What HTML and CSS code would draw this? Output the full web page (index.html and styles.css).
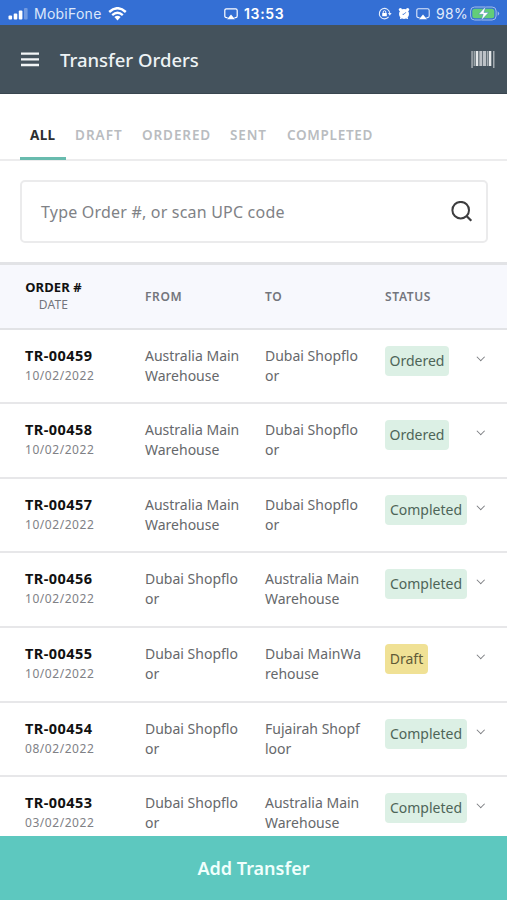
FILE: index.html
```html
<!DOCTYPE html>
<html lang="en">
<head>
<meta charset="utf-8">
<title>Transfer Orders</title>
<link rel="stylesheet" href="styles.css">
</head>
<body>
<div class="app">
  <div class="statusbar">
    <div class="carrier">
      <svg width="21" height="14" viewBox="0 0 21 14"><g fill="#fff"><rect x="0.5" y="8.5" width="3.6" height="4" rx="1"/><rect x="5.7" y="6.5" width="3.6" height="6" rx="1"/><rect x="10.8" y="3.5" width="3.6" height="9" rx="1"/><rect x="16" y="1" width="3.6" height="11.5" rx="1" opacity=".3"/></g></svg>
      <span class="carrier-name">MobiFone</span>
      <svg width="19" height="14" viewBox="0 0 19 14"><g fill="none" stroke="#fff" stroke-width="2.4"><path d="M1.2 5Q9.5-2.6 17.8 5"/><path d="M4.2 8.1Q9.5 3.4 14.8 8.1"/></g><path d="M6.4 10.1Q9.5 7.6 12.6 10.1L9.5 13.4Z" fill="#fff"/></svg>
    </div>
    <div class="clock">
      <svg width="14" height="12" viewBox="0 0 14 12"><path d="M3.5 9.6H2.4Q.8 9.6.8 8V2.4Q.8.8 2.4.8h9.2q1.6 0 1.6 1.6V8q0 1.6-1.6 1.6h-1.1" fill="none" stroke="#fff" stroke-width="1.2"/><path d="M7 6.5l4 4.7H3z" fill="#fff"/></svg>
      <span class="time">13:53</span>
    </div>
    <div class="indicators">
      <svg width="14" height="13" viewBox="0 0 14 13"><path d="M10.6 9.9a5.2 5.2 0 1 1 1.1-4" fill="none" stroke="#e6eefb" stroke-width="1.1"/><path d="M9.9 6h3.7l-1.8 2.7z" fill="#e6eefb"/><rect x="4.2" y="6" width="4.6" height="3.3" rx=".5" fill="#fff"/><path d="M5.2 6V5a1.3 1.3 0 0 1 2.6 0v1" fill="none" stroke="#fff" stroke-width=".9"/></svg>
      <svg width="12" height="13" viewBox="0 0 12 13"><circle cx="6" cy="7" r="5" fill="#fff"/><circle cx="2.4" cy="2.6" r="1.6" fill="#fff"/><circle cx="9.600" cy="2.600" r="1.600" fill="#fff"/><path d="M2.300 10l-.3 2h2zM9.700 10l.3 2H8z" fill="#fff"/><path d="M7.800 5.300 6 7.300H4.600" fill="none" stroke="#346fd4" stroke-width=".9"/></svg>
      <svg width="14" height="12" viewBox="0 0 14 12"><path d="M3.500 9.600H2.400Q.8 9.600.8 8V2.400Q.8.8 2.400.8h9.200q1.600 0 1.600 1.600V8q0 1.600-1.600 1.600h-1.100" fill="none" stroke="#dfe9fa" stroke-width="1.100"/><path d="M7 6.500l4 4.700H3z" fill="#fff"/></svg>
      <span class="percent">98%</span>
      <svg class="battery" width="30" height="15" viewBox="0 0 30 15"><rect x=".6" y="1" width="25.500" height="13" rx="4" fill="none" stroke="#a3bdea" stroke-width="1"/><rect x="2.300" y="2.700" width="22" height="9.600" rx="2.500" fill="#63cd78"/><path d="M27.700 5.200q3 2.300 0 4.600z" fill="#a3bdea"/><path d="M15.700.4 8.600 8.300h4.600l-2 6.300 7.400-8.100h-4.700z" fill="#fff" stroke="#346fd4" stroke-width=".4"/></svg>
    </div>
  </div>

  <header class="appbar">
    <svg width="18" height="15" viewBox="0 0 18 15"><path d="M0 1.600h18M0 7.300h18M0 13h18" stroke="#f2f5f6" stroke-width="2.300"/></svg>
    <h1 class="title">Transfer Orders</h1>
    <svg class="barcode" width="24" height="17" viewBox="0 0 24 17"><g fill="#e4e7e9"><rect x=".3" width="1.500" height="17" opacity=".6"/><rect x="2.600" width="1.400" height="15" opacity=".55"/><rect x="4.700" width="2.600" height="15"/><rect x="8.300" width="3" height="15" opacity=".75"/><rect x="12" width="3" height="15" opacity=".75"/><rect x="15.700" width="1.300" height="15" opacity=".6"/><rect x="17.700" width="2.600" height="15"/><rect x="22" width="1.500" height="17" opacity=".6"/></g></svg>
  </header>

  <nav class="tabs">
    <span class="tab active">ALL</span><span class="tab draft">DRAFT</span><span class="tab ordered">ORDERED</span><span class="tab sent">SENT</span><span class="tab completed">COMPLETED</span>
  </nav>

  <div class="search">
    <span class="placeholder">Type Order #, or scan UPC code</span>
    <svg width="22" height="22" viewBox="0 0 22 22"><circle cx="9.700" cy="9.200" r="8.300" fill="none" stroke="#3d3d3f" stroke-width="2"/><path d="M15.500 15l4.800 4.800" stroke="#3d3d3f" stroke-width="2.200"/></svg>
  </div>

  <main class="table">
    <div class="row head">
      <div class="order-head"><b>ORDER #</b><small>DATE</small></div><span>FROM</span><span>TO</span><span>STATUS</span>
    </div>
    <div class="row">
      <div><b class="num">TR-00459</b><span class="date">10/02/2022</span></div>
      <div class="place">Australia Main<br>Warehouse</div><div class="place">Dubai Shopflo<br>or</div>
      <div><span class="badge b-ordered">Ordered</span></div><i class="chev"></i>
    </div>
    <div class="row">
      <div><b class="num">TR-00458</b><span class="date">10/02/2022</span></div>
      <div class="place">Australia Main<br>Warehouse</div><div class="place">Dubai Shopflo<br>or</div>
      <div><span class="badge b-ordered">Ordered</span></div><i class="chev"></i>
    </div>
    <div class="row">
      <div><b class="num">TR-00457</b><span class="date">10/02/2022</span></div>
      <div class="place">Australia Main<br>Warehouse</div><div class="place">Dubai Shopflo<br>or</div>
      <div><span class="badge b-completed">Completed</span></div><i class="chev"></i>
    </div>
    <div class="row">
      <div><b class="num">TR-00456</b><span class="date">10/02/2022</span></div>
      <div class="place">Dubai Shopflo<br>or</div><div class="place">Australia Main<br>Warehouse</div>
      <div><span class="badge b-completed">Completed</span></div><i class="chev"></i>
    </div>
    <div class="row">
      <div><b class="num">TR-00455</b><span class="date">10/02/2022</span></div>
      <div class="place">Dubai Shopflo<br>or</div><div class="place">Dubai MainWa<br>rehouse</div>
      <div><span class="badge b-draft">Draft</span></div><i class="chev"></i>
    </div>
    <div class="row">
      <div><b class="num">TR-00454</b><span class="date">08/02/2022</span></div>
      <div class="place">Dubai Shopflo<br>or</div><div class="place">Fujairah Shopf<br>loor</div>
      <div><span class="badge b-completed">Completed</span></div><i class="chev"></i>
    </div>
    <div class="row">
      <div><b class="num">TR-00453</b><span class="date">03/02/2022</span></div>
      <div class="place">Dubai Shopflo<br>or</div><div class="place">Australia Main<br>Warehouse</div>
      <div><span class="badge b-completed">Completed</span></div><i class="chev"></i>
    </div>
  </main>

  <footer class="add"><span>Add Transfer</span></footer>
</div>
</body>
</html>
```

FILE: styles.css
```css
* { box-sizing: border-box; }
body { margin: 0; background: #fff; font-family: "Noto Sans", sans-serif; }
svg { display: block; flex: none; }
.app { width: 507px; height: 900px; display: flex; flex-direction: column; overflow: hidden; }

.statusbar {
  height: 25px; flex: none; background: #346fd4; color: #fff;
  display: grid; grid-template-columns: 216px 1fr auto; align-items: center;
  padding: 2px 7px 0 8px; font-family: Inter, sans-serif;
}
.carrier, .clock, .indicators { display: flex; align-items: center; }
.carrier-name { font-size: 14px; margin: 0 7px 0 5px; width: 67px; letter-spacing: 0.25px; color: #dce7fa; }
.clock { gap: 6px; }
.time { font-size: 14px; font-weight: 600; letter-spacing: 0.65px; }
.indicators { gap: 6px; }
.percent { font-size: 14px; color: #e3ecfb; margin: 0 -4px 0 0; letter-spacing: 0.3px; }

.appbar {
  height: 69px; flex: none; background: #44525c; border-bottom: 1px solid #39464f;
  display: flex; align-items: center; padding: 0 12px 0 21px;
}
.title { margin: 1px 0 0 21px; flex: 1; font-size: 18.5px; font-weight: 500; color: #eef3f5; line-height: 24px; }

.tabs {
  height: 67px; flex: none; border-bottom: 2px solid #ececed;
  display: flex; padding-left: 20px; font-size: 13.5px; font-weight: 600; color: #b9bcc0;
}
.tab { height: 67px; padding-top: 31px; line-height: 20px; letter-spacing: 0.7px; white-space: nowrap; }
.active { width: 46px; height: 66px; padding-left: 10px; color: #2d2f31; border-bottom: 3px solid #68bbae; font-weight: 700; letter-spacing: 0.3px; }
.draft { margin-left: 9px; width: 67px; letter-spacing: 1px; }
.ordered { width: 88px; letter-spacing: 0.9px; }
.sent { width: 57px; letter-spacing: 0.9px; }

.search {
  margin: 19px 19px 19px 20px; height: 63px; flex: none; border: 2px solid #ebebec; border-radius: 5px;
  display: flex; align-items: center; justify-content: space-between; padding: 0 13px 0 19px;
}
.placeholder { font-size: 16px; letter-spacing: 0.2px; color: #808286; white-space: nowrap; }

.table { flex: 1; min-height: 0; overflow: hidden; }
.row {
  height: 74.6px; padding: 16px 0 0 25px; border-bottom: 2px solid #e7e7e9;
  display: grid; grid-template-columns: 120px 120px 120px 91px auto; align-items: start;
}
.head {
  height: 67.7px; padding-top: 0; align-items: center; background: #f7f8fd;
  border-top: 3px solid #e2e3e6; border-bottom: 2px solid #e2e3e6;
  font-size: 12px; font-weight: 600; color: #73757c; letter-spacing: 0.65px;
}
.order-head { width: 57px; display: flex; flex-direction: column; align-items: center; line-height: 18px; white-space: nowrap; }
.order-head b { font-size: 13px; font-weight: 700; color: #111; letter-spacing: 0.1px; }
.order-head small { font-size: 12px; font-weight: 400; letter-spacing: 0.2px; }
.num { display: block; font-size: 14.5px; letter-spacing: 0.45px; line-height: 19px; color: #111; white-space: nowrap; }
.date { display: block; font-size: 12px; letter-spacing: 0.55px; line-height: 22px; color: #808186; }
.place { font-size: 14px; line-height: 20px; color: #66686b; white-space: nowrap; }
.badge { display: block; height: 30px; line-height: 29px; border-radius: 4px; font-size: 14px; text-align: center; color: #4e6558; background: #dcf0e5; }
.b-ordered { width: 64px; }
.b-completed { width: 82px; }
.b-draft { width: 43px; background: #f0e195; color: #605a36; }
.chev { width: 5.5px; height: 5.5px; margin: 8px 0 0 2px; border: solid #77797d; border-width: 0 1.6px 1.6px 0; transform: rotate(45deg); }

.add { height: 64px; flex: none; background: #5dc8bf; color: #f0fffc; display: flex; align-items: center; justify-content: center; font-size: 18px; font-weight: 600; }
```
